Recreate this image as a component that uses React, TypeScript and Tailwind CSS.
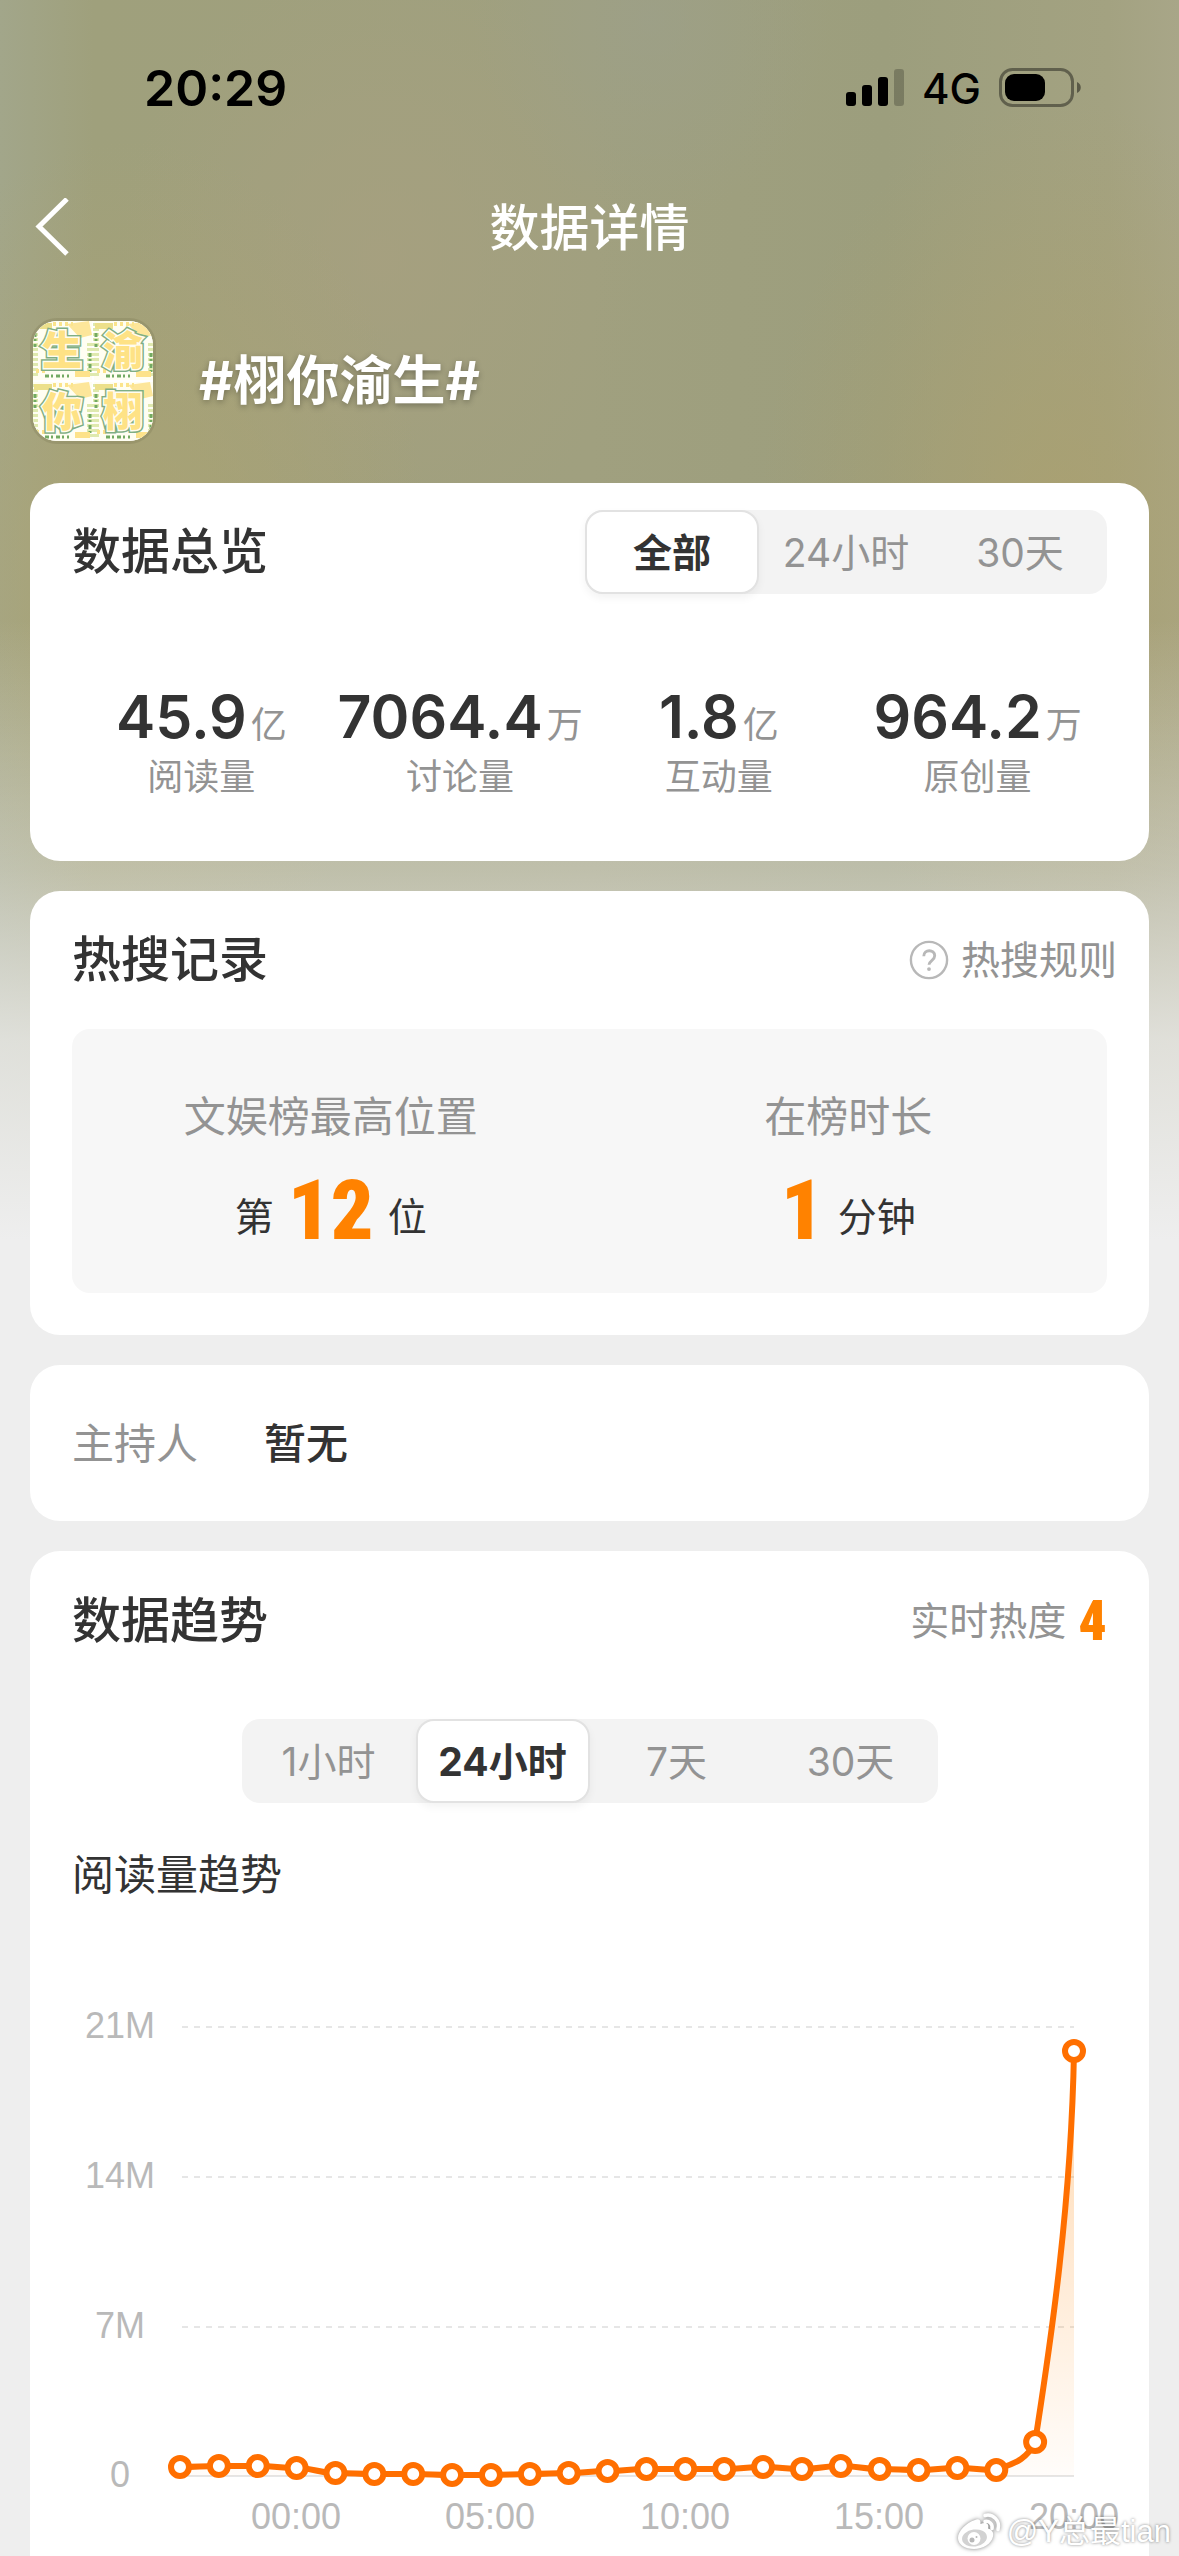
import { useState } from 'react';

const avatarChars = [
  { char: '生', x: 0, y: 0 },
  { char: '渝', x: 61, y: 0 },
  { char: '你', x: 0, y: 61 },
  { char: '栩', x: 61, y: 61 },
];

const stats = [
  { value: '45.9', unit: '亿', label: '阅读量' },
  { value: '7064.4', unit: '万', label: '讨论量' },
  { value: '1.8', unit: '亿', label: '互动量' },
  { value: '964.2', unit: '万', label: '原创量' },
];

const yTicks = [
  { label: '21M', y: 122 },
  { label: '14M', y: 272 },
  { label: '7M', y: 422 },
  { label: '0', y: 571 },
];

const xTicks = [
  { label: '00:00', x: 266 },
  { label: '05:00', x: 460 },
  { label: '10:00', x: 655 },
  { label: '15:00', x: 849 },
  { label: '20:00', x: 1044 },
];

const points = [
  562, 561, 561, 563, 568, 569, 569, 570, 570, 569, 568, 566, 564, 564, 564, 562, 564, 561, 564, 565, 563, 565, 537, 146,
].map((y, i) => ({ x: 150 + (i * 894) / 23, y }));

// Flat part of the day, then the two steep segments at the end.
const flat = points
  .slice(0, 22)
  .map((p, i, all) => {
    if (i === 0) return `M${p.x} ${p.y}`;
    const prev = all[i - 1];
    const mid = (prev.x + p.x) / 2;
    return `C${mid} ${prev.y} ${mid} ${p.y} ${p.x} ${p.y}`;
  })
  .join(' ');
const line = `${flat} C979 559 995 558 ${points[22].x} 537 C1016 465 1041 315 1044 146`;

function Segmented({ options, initial }: { options: string[]; initial: string }) {
  const [active, setActive] = useState(initial);

  return (
    <div className="flex h-[84px] rounded-[18px] bg-[#f3f3f3]">
      {options.map((option) => (
        <button
          key={option}
          type="button"
          aria-pressed={option === active}
          onClick={() => setActive(option)}
          className={
            option === active
              ? 'w-[174px] rounded-[18px] border-2 border-[#e2e2e2] bg-white pt-[2px] text-[39px] font-bold text-[#333333] shadow-[0_4px_8px_rgba(0,0,0,0.05)]'
              : 'w-[174px] pt-[2px] text-[39px] text-[#939393]'
          }
        >
          {option}
        </button>
      ))}
    </div>
  );
}

function StatusBar() {
  return (
    <div className="flex h-44 items-center justify-between pr-[97px] pl-[144px] text-black">
      <span className="text-[50px] font-semibold">20:29</span>
      <div className="flex items-center gap-[18px]">
        <svg width="58" height="38" viewBox="0 0 58 38" aria-hidden="true">
          <rect x="0" y="23" width="10" height="14" rx="3" />
          <rect x="16" y="16" width="10" height="21" rx="3" />
          <rect x="32" y="8" width="10" height="29" rx="3" />
          <rect x="48" y="0" width="10" height="37" rx="3" opacity="0.22" />
        </svg>
        <span className="text-[42px] font-medium">4G</span>
        <svg width="83" height="40" viewBox="0 0 83 40" aria-hidden="true">
          <rect x="1.5" y="1.5" width="72" height="36" rx="12" fill="none" stroke="#000" strokeWidth="3" opacity="0.4" />
          <rect x="6" y="6" width="40" height="27" rx="9" />
          <path d="M78 14c5 2 5 9 0 11z" opacity="0.45" />
        </svg>
      </div>
    </div>
  );
}

function Avatar() {
  return (
    <svg
      viewBox="0 0 120 120"
      role="img"
      aria-label="栩你渝生"
      className="size-[120px] shrink-0 rounded-[24px] bg-white shadow-[0_0_0_3px_rgba(130,125,90,0.35)]"
    >
      {avatarChars.map(({ char, x, y }) => (
        <g key={char} transform={`translate(${x} ${y})`}>
          <rect width="59" height="59" fill="#fffef2" />
          <path d="M2 2v55M57 22v34" stroke="#dfe9ae" strokeWidth="6" strokeDasharray="3 2" />
          <path d="M2 12v14M57 32v20M12 55h24" stroke="#73aa62" strokeWidth="3" strokeDasharray="4 2 2 3" />
          <path d="M34 3l22-3 3 14-12 3z" fill="#fde69a" />
          <path d="M3 50h12M20 3h20" stroke="#fbe48c" strokeWidth="4" strokeDasharray="3 3" />
          <rect x="1" y="2" width="18" height="6" fill="#ece08b" />
          <rect x="42" y="50" width="15" height="6" fill="#fde28a" />
          <text
            x="29"
            y="44"
            textAnchor="middle"
            fontSize="40"
            fontWeight="900"
            fill="#fee285"
            stroke="#7fae84"
            strokeWidth="6"
            paintOrder="stroke"
          >
            {char}
          </text>
          <text
            x="29"
            y="44"
            textAnchor="middle"
            fontSize="40"
            fontWeight="900"
            fill="#fee285"
            stroke="#fffdf0"
            strokeWidth="3"
            paintOrder="stroke"
            aria-hidden="true"
          >
            {char}
          </text>
        </g>
      ))}
    </svg>
  );
}

function BigNumber({ children }: { children: string }) {
  return (
    <span className="font-['Roboto_Condensed','Liberation_Sans',sans-serif] text-[84px] leading-[72px] font-black text-[#ff8200]">
      {children}
    </span>
  );
}

function TrendChart() {
  return (
    <svg viewBox="0 0 1119 640" className="block h-auto w-full" role="img" aria-label="阅读量趋势">
      <defs>
        <linearGradient id="area" x1="0" y1="146" x2="0" y2="571" gradientUnits="userSpaceOnUse">
          <stop offset="0" stopColor="#ff8200" stopOpacity="0.32" />
          <stop offset="1" stopColor="#ff8200" stopOpacity="0.02" />
        </linearGradient>
      </defs>
      <g fontFamily="Liberation Sans, Arial, sans-serif" fontSize="36" fill="#b9b9b9" textAnchor="middle">
        {yTicks.map((tick) => (
          <text key={tick.label} x="90" y={tick.y + 11}>{tick.label}</text>
        ))}
        {xTicks.map((tick) => (
          <text key={tick.label} x={tick.x} y="624">{tick.label}</text>
        ))}
      </g>
      {yTicks.map((tick) => (
        <path
          key={tick.label}
          d={`M152 ${tick.y}H1044`}
          stroke="#e6e6e6"
          strokeWidth="2"
          strokeDasharray={tick.label === '0' ? undefined : '6 6'}
        />
      ))}
      <path d={`${line} V571 H150 Z`} fill="url(#area)" />
      <path d={line} fill="none" stroke="#ff6f00" strokeWidth="6" strokeLinejoin="round" />
      {points.map((p) => (
        <circle key={p.x} cx={p.x} cy={p.y} r="9" fill="#fff" stroke="#ff6f00" strokeWidth="6" />
      ))}
    </svg>
  );
}

function Watermark() {
  return (
    <div className="absolute right-2 bottom-1 flex items-center gap-1 font-['Liberation_Sans','Noto_Sans_CJK_SC',sans-serif] text-[31px] leading-10 text-white [text-shadow:0_0_3px_rgba(0,0,0,0.5)]">
      <svg width="46" height="40" viewBox="0 0 46 40" className="drop-shadow-[0_0_2px_rgba(0,0,0,0.5)]" aria-hidden="true">
        <path
          d="M18 8c3-1.500 6-.5 5.500 4 5-2 9-1 7.500 4.500 4 1 6 4 5 8C34.500 32 26 37 17 37S1 32.500 1 26C1 19 9 11 18 8z"
          fill="#fff"
        />
        <ellipse cx="17.500" cy="26" rx="12.500" ry="8.500" fill="#d2d2d2" transform="rotate(-8 17.500 26)" />
        <circle cx="17" cy="26.500" r="6.500" fill="#fff" />
        <circle cx="15" cy="28" r="2.500" fill="#b8b8b8" />
        <circle cx="19.500" cy="25" r="1" fill="#b8b8b8" />
        <path d="M28 9.500c4-1 8 2.500 7 7M28 3.500c8-2 15.500 5 13 14" fill="none" stroke="#fff" strokeWidth="3.500" strokeLinecap="round" />
      </svg>
      <span>@Y总最tian</span>
    </div>
  );
}

export default function App() {
  return (
    <div className="relative flex min-h-screen flex-col bg-[#eeeeee] bg-[linear-gradient(180deg,rgba(238,238,238,0)_620px,rgba(238,238,238,0.4)_870px,rgba(238,238,238,0.8)_1040px,#eeeeee_1240px),radial-gradient(ellipse_300px_420px_at_130px_560px,rgba(174,164,112,0.7),transparent),radial-gradient(ellipse_300px_420px_at_1060px_520px,rgba(172,160,108,0.7),transparent),radial-gradient(ellipse_260px_300px_at_380px_260px,rgba(168,160,128,0.7),transparent),radial-gradient(ellipse_180px_200px_at_650px_20px,rgba(156,160,138,0.7),transparent),linear-gradient(90deg,#a2a68a,#9fa07c_8%,#a0a07f_50%,#9c9e7d_75%,#a3a281_94%,#a8a688)] font-['Inter','Noto_Sans_CJK_SC',sans-serif]">
      <StatusBar />

      <header className="grid h-[104px] grid-cols-[1fr_auto_1fr] items-center px-8 text-white">
        <button type="button" aria-label="返回" className="justify-self-start">
          <svg width="40" height="60" viewBox="0 0 40 60" fill="none" stroke="currentColor" strokeWidth="5" aria-hidden="true">
            <path d="M35 1L7 28.500 35 56" />
          </svg>
        </button>
        <h1 className="text-[50px] leading-[60px] font-medium">数据详情</h1>
      </header>

      <div className="mt-[41px] mb-[42px] flex items-center gap-[46px] px-[33px]">
        <Avatar />
        <p className="text-[53px] leading-[60px] font-bold text-white [text-shadow:0_2px_6px_rgba(0,0,0,0.3)]">#栩你渝生#</p>
      </div>

      <main className="flex grow flex-col gap-[30px] px-[30px] text-[#333333]">
        <section className="rounded-[30px] bg-white px-[42px] pt-[27px] pb-[60px]">
          <div className="flex items-center justify-between">
            <h2 className="text-[49px] leading-[60px] font-medium">数据总览</h2>
            <Segmented options={['全部', '24小时', '30天']} initial="全部" />
          </div>
          <dl className="mt-[88px] grid grid-cols-4 text-center text-[36px] text-[#939393]">
            {stats.map((stat) => (
              <div key={stat.label} className="flex flex-col-reverse">
                <dt className="leading-[48px]">{stat.label}</dt>
                <dd className="flex h-[71px] items-baseline justify-center gap-1 leading-[70px]">
                  <span className="text-[59px] font-semibold text-[#333333]">{stat.value}</span>
                  {stat.unit}
                </dd>
              </div>
            ))}
          </dl>
        </section>

        <section className="rounded-[30px] bg-white px-[42px] pt-[26px] pb-[42px]">
          <div className="flex h-[84px] items-center justify-between pt-[2px]">
            <h2 className="text-[49px] leading-[60px] font-medium">热搜记录</h2>
            <a href="#rules" className="-mr-[10px] flex items-center gap-3 text-[39px] leading-[60px] text-[#939393]">
              <svg width="40" height="40" viewBox="0 0 42 42" fill="none" stroke="#b8b8b8" strokeWidth="2.500" aria-hidden="true">
                <circle cx="21" cy="21" r="19" />
                <path d="M15.500 17c0-7.500 11.500-7.500 11.500-.5 0 5-6 5-6 9.500" strokeWidth="3" />
                <circle cx="21" cy="30.500" r="2" fill="#b8b8b8" stroke="none" />
              </svg>
              热搜规则
            </a>
          </div>
          <dl className="mt-7 grid grid-cols-2 rounded-[18px] bg-[#f7f7f7] pt-[58px] pb-[34px] text-center">
            <div>
              <dt className="text-[42px] leading-[60px] text-[#939393]">文娱榜最高位置</dt>
              <dd className="mt-7 flex items-start justify-center gap-[14px] text-[39px] leading-[84px]">
                第
                <BigNumber>12</BigNumber>
                位
              </dd>
            </div>
            <div>
              <dt className="text-[42px] leading-[60px] text-[#939393]">在榜时长</dt>
              <dd className="mt-7 flex items-start justify-center gap-[14px] text-[39px] leading-[84px]">
                <BigNumber>1</BigNumber>
                分钟
              </dd>
            </div>
          </dl>
        </section>

        <section className="flex gap-[66px] rounded-[30px] bg-white px-[42px] pt-[49px] pb-[47px] text-[42px] leading-[60px]">
          <span className="text-[#939393]">主持人</span>
          <span className="font-medium">暂无</span>
        </section>

        <section className="flex grow flex-col rounded-t-[30px] bg-white pt-[26px]">
          <div className="flex h-[84px] items-center justify-between px-[42px] pt-[3px]">
            <h2 className="text-[49px] leading-[60px] font-medium">数据趋势</h2>
            <p className="flex items-center gap-3 text-[39px] leading-[60px] text-[#939393]">
              实时热度
              <span className="font-['Roboto_Condensed','Liberation_Sans',sans-serif] text-[56px] font-black text-[#ff8200]">4</span>
            </p>
          </div>
          <div className="mt-[58px] flex justify-center">
            <Segmented options={['1小时', '24小时', '7天', '30天']} initial="24小时" />
          </div>
          <h3 className="mt-[42px] px-[42px] text-[42px] leading-[60px]">阅读量趋势</h3>
          <TrendChart />
        </section>
      </main>

      <Watermark />
    </div>
  );
}
